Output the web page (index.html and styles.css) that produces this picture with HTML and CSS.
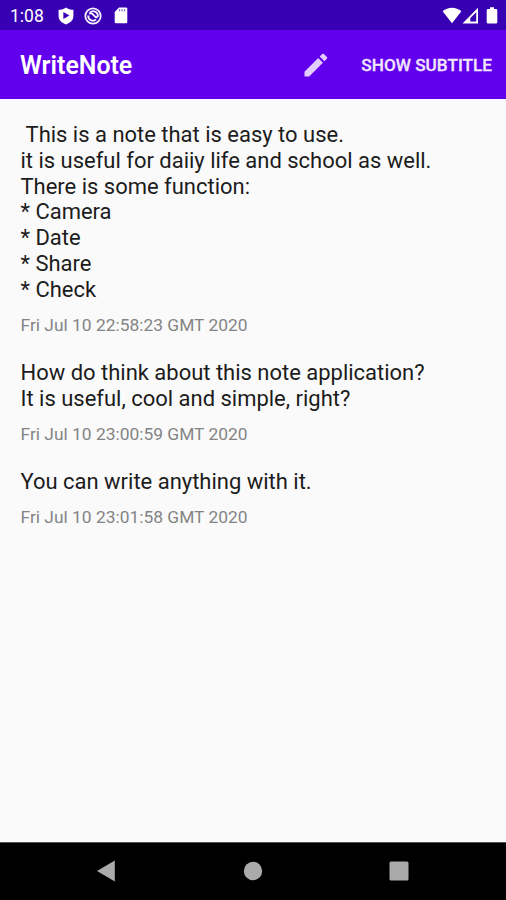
FILE: index.html
```html
<!DOCTYPE html>
<html lang="en">
<head>
<meta charset="utf-8">
<title>WriteNote</title>
<link rel="stylesheet" href="styles.css">
</head>
<body>
<div class="screen">
  <header class="status">
    <span class="clock">1:08</span>
    <svg class="shield" width="16" height="18" viewBox="0 0 16 18"><path fill="#fff" d="M8 .4C6 2 3.300 2.700.6 2.700V9c0 4.200 3.200 7 7.400 8.400C12.200 16 15.400 13.200 15.400 9V2.700C12.700 2.700 10 2 8 .4z"/><path fill="#3700b3" d="M5.400 5v7l6-3.500z"/></svg>
    <svg class="sync" width="18" height="18" viewBox="0 0 18 18" fill="none" stroke="#f4effd"><circle cx="9" cy="9" r="7.700" stroke-width="1.800"/><path stroke-width="1.900" d="M4.300 8.500a4.700 4.700 0 0 0 7.700 4.100M6 5.500a4.600 4.600 0 0 1 7.600 4.600M5 6.500q3-.8 4.500 1.500t4 2.500"/></svg>
    <svg class="sdcard" width="14" height="17" viewBox="0 0 14 17"><path fill="#fff" d="M5 .5h7a1.300 1.300 0 0 1 1.300 1.300v13.100a1.300 1.300 0 0 1-1.300 1.300H2a1.300 1.300 0 0 1-1.300-1.300V5z"/><path stroke="#3700b3" stroke-opacity=".65" stroke-width="1.200" d="M5.500 2.300v2M8 2.300v2M10.500 2.300v2"/></svg>
    <span class="grow"></span>
    <svg width="20" height="17" viewBox="0 0 20 17"><path fill="#fff" d="M.6 4.200C5.800-.5 14.200-.5 19.400 4.200L10 16.300z"/></svg>
    <svg class="signal" width="17" height="17" viewBox="0 0 17 17"><path fill="#fff" fill-rule="evenodd" d="M.5 16.500 16 .8v15.700zM8.300 14.600h5.900V5.200L8.300 11z"/></svg>
    <svg class="battery" width="12" height="17" viewBox="0 0 12 17"><path fill="#fff" d="M4 .3h4v1.700h2q1.300 0 1.300 1.300v12q0 1.300-1.300 1.300H2q-1.300 0-1.300-1.300v-12Q.7 2 2 2h2z"/></svg>
  </header>
  <div class="appbar">
    <h1>WriteNote</h1>
    <span class="grow"></span>
    <svg class="pencil" width="24" height="24" viewBox="0 0 24 24"><path fill="#e3ccff" d="M.5 18.800v4.700h4.700L18.900 9.800l-4.700-4.700zM22.900 5.800a1.300 1.300 0 0 0 0-1.800L20 1.100a1.300 1.300 0 0 0-1.800 0l-2.500 2.500 4.700 4.700z"/></svg>
    <span class="action">SHOW SUBTITLE</span>
  </div>
  <main class="notes">
    <article class="note">
      <p class="text"> This is a note that is easy to use.
it is useful for daiiy life and school as well.
There is some function:
* Camera
* Date
* Share
* Check</p>
      <p class="date">Fri Jul 10 22:58:23 GMT 2020</p>
    </article>
    <article class="note">
      <p class="text">How do think about this note application?
It is useful, cool and simple, right?</p>
      <p class="date">Fri Jul 10 23:00:59 GMT 2020</p>
    </article>
    <article class="note">
      <p class="text">You can write anything with it.</p>
      <p class="date">Fri Jul 10 23:01:58 GMT 2020</p>
    </article>
  </main>
  <nav class="navbar">
    <svg width="20" height="22" viewBox="0 0 20 22"><path fill="#aaa" d="M1 11 18.800.4v21.200z"/></svg>
    <svg width="20" height="20" viewBox="0 0 20 20"><circle cx="10" cy="10" r="9.200" fill="#aaa"/></svg>
    <svg width="20" height="20" viewBox="0 0 20 20"><rect x=".5" y=".5" width="19" height="19" rx="1.500" fill="#aaa"/></svg>
  </nav>
</div>
</body>
</html>
```
FILE: styles.css
```css
* { box-sizing: border-box; }
body {
  margin: 0;
  font-family: Roboto, "Liberation Sans", sans-serif;
}
h1, p { margin: 0; }
svg { display: block; flex: none; }
.grow { flex: 1; }
.screen {
  width: 506px;
  height: 900px;
  display: flex;
  flex-direction: column;
  background: #fafafa;
  overflow: hidden;
}
.status {
  height: 30px;
  flex: none;
  display: flex;
  align-items: center;
  padding: 1px 8px 0 10px;
  background: #3700b3;
  color: #fff;
}
.clock {
  width: 48px;
  font-size: 17.500px;
  line-height: 20px;
  padding-top: 1px;
}
.sync { margin-left: 10px; }
.sdcard { margin-left: 12px; }
.battery { margin-left: 7px; }
.appbar {
  height: 69px;
  flex: none;
  display: flex;
  align-items: center;
  padding: 0 14px 0 20px;
  background: #6200ee;
  color: #fff;
}
h1 {
  font-size: 24.900px;
  font-weight: 600;
  line-height: 30px;
  padding-top: 2px;
}
.pencil { margin-right: 33px; }
.action {
  font-size: 17.200px;
  font-weight: 500;
  color: #f0e5fd;
  -webkit-text-stroke: .3px #f0e5fd;
}
.notes {
  flex: 1;
  padding: 23px 20px 0 20.500px;
}
.note { margin-bottom: 23.900px; }
.text {
  font-size: 21.980px;
  line-height: 25.800px;
  white-space: pre;
  color: #1c1c1c;
}
.date {
  margin-top: 11.400px;
  font-size: 17.400px;
  line-height: 22px;
  color: #848484;
}
.navbar {
  height: 58px;
  flex: none;
  display: flex;
  align-items: center;
  justify-content: space-between;
  padding: 0 97px 1px 96px;
  background: #000;
  border-top: 1px solid #555;
}
```
